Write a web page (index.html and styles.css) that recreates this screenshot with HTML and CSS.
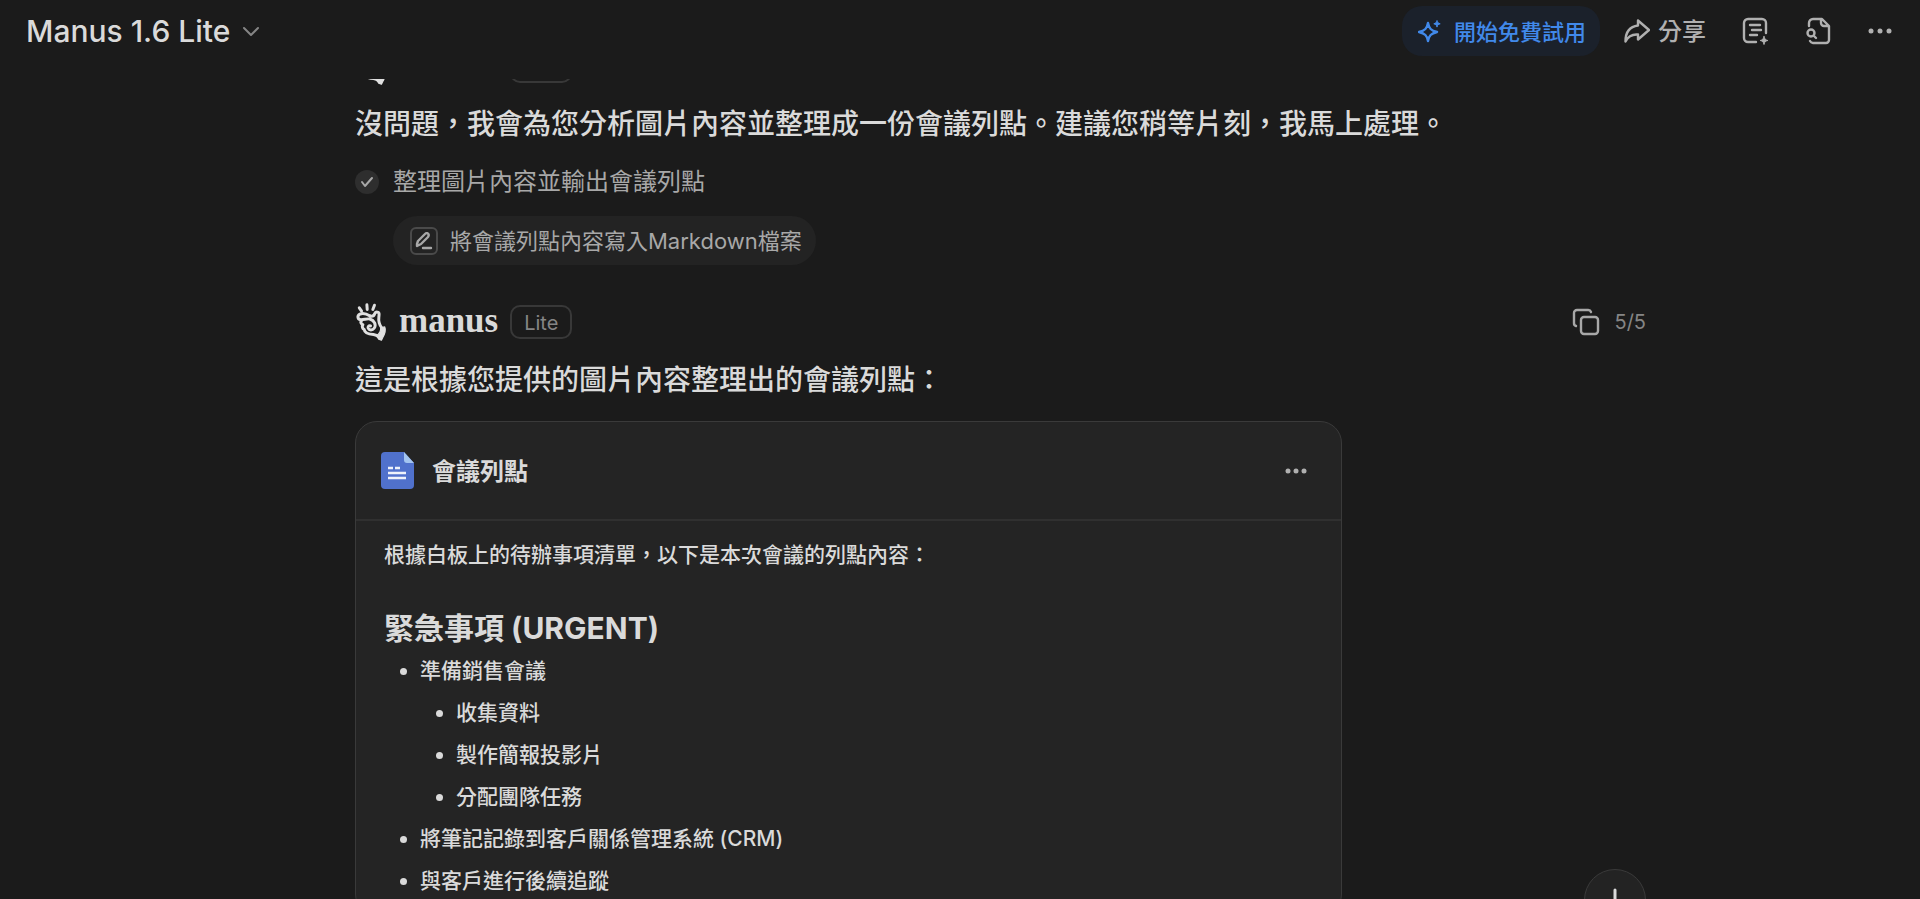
FILE: index.html
```html
<!DOCTYPE html>
<html lang="zh-Hant">

<head>

    <meta charset="UTF-8">
    <meta name="viewport" content="width=device-width, initial-scale=1.0">
    <title>Manus</title>

    <link rel="stylesheet" href="styles.css">

</head>

<body>

    <svg class="sprite" aria-hidden="true">
        <symbol id="hand" viewBox="0 0 100 120" fill="none" stroke="currentColor" stroke-width="9" stroke-linecap="round" stroke-linejoin="round">
            <path d="M13 17l7 10M36 8l1 14M59 9l-5 13" />
            <path d="M46 42c-8-5-21-11-31-6-10 6-7 17 4 17 9 0 19-4 26-2 14 4 20 18 13 28-5 7-15 7-18 0-2-5 2-9 7-7" />
            <path d="M46 42c8 2 12-2 14-8 3-6 13-5 13 2 0 10-3 17 0 25 2 6 3 11 7 15" />
            <path d="M20 55c-4 6-2 11 4 13-4 6-1 12 4 15 1 10 16 14 28 15 9 1 12 3 16 7" />
            <path d="M78 78l12-3c4 9 0 21-6 32l-4 8-8-3-6-10c8-7 13-14 12-24z" fill="currentColor" stroke-width="4" />
        </symbol>
    </svg>

    <header class="topbar">

        <button class="model-btn">
            Manus 1.6 Lite
            <svg width="18" height="18" viewBox="0 0 18 18" fill="none" stroke="#858585" stroke-width="2" stroke-linecap="round" stroke-linejoin="round"><path d="M2 6l7 7 7-7" /></svg>
        </button>

        <div class="actions">

            <button class="trial-btn">
                <svg width="24" height="24" viewBox="0 0 24 24" fill="none" stroke="currentColor" stroke-width="2.400" stroke-linejoin="round">
                    <path d="M10 4c1 5.500 3 7.500 9 9-6 1.500-8 3.500-9 9-1-5.500-3-7.500-9-9 6-1.500 8-3.500 9-9z" />
                    <path d="M19 1.500c.4 2 1.200 2.800 3.200 3.300-2 .5-2.800 1.300-3.200 3.300-.4-2-1.200-2.800-3.200-3.300 2-.5 2.800-1.300 3.200-3.300z" fill="currentColor" stroke-width="1" />
                </svg>
                <span>開始免費試用</span>
            </button>

            <button class="share-btn">
                <svg width="26" height="26" viewBox="0 0 26 26" fill="none" stroke="currentColor" stroke-width="2.400" stroke-linejoin="round"><path d="M14 2.500L25 12 14 21.500V16.500C8 16 4 18.500 1.500 23.500 1.500 14 6 8.500 14 7.500z" /></svg>
                <span>分享</span>
            </button>

            <button class="icon-btn" aria-label="筆記">
                <svg width="28" height="28" viewBox="0 0 28 28" fill="none" stroke="currentColor" stroke-width="2.400" stroke-linecap="round" stroke-linejoin="round">
                    <path d="M14 25H6a4 4 0 0 1-4-4V6a4 4 0 0 1 4-4h14a4 4 0 0 1 4 4v10M8 8h10M10 13h9M8 18h7" />
                    <path d="M22 19.500c.5 2.500 1.300 3.300 3.800 4-2.500.6-3.300 1.400-3.800 4-.5-2.600-1.300-3.400-3.800-4 2.500-.7 3.300-1.500 3.800-4z" fill="currentColor" stroke-width="1" />
                </svg>
            </button>

            <button class="icon-btn" aria-label="檔案">
                <svg width="26" height="28" viewBox="2 0 26 28" fill="none" stroke="currentColor" stroke-width="2.400" stroke-linecap="round" stroke-linejoin="round">
                    <path d="M5 9V6a4 4 0 0 1 4-4h9l7 7v14a3 3 0 0 1-3 3H9a4 4 0 0 1-3-2M17 2v4a3 3 0 0 0 3 3h4" />
                    <circle cx="7" cy="16" r="3.500" />
                    <path d="M10 19l2 2" />
                </svg>
            </button>

            <button class="icon-btn" aria-label="更多">
                <svg width="24" height="24" viewBox="0 0 24 24" fill="currentColor"><circle cx="3" cy="12" r="2.500" /><circle cx="12" cy="12" r="2.500" /><circle cx="21" cy="12" r="2.500" /></svg>
            </button>

        </div>

    </header>

    <main class="chat">

        <div class="messages">

            <section class="message">

                <div class="message-head">
                    <svg class="hand" width="33" height="40"><use href="#hand" /></svg>
                    <span class="brand">manus</span>
                    <span class="badge">Lite</span>
                </div>

                <p class="message-text">沒問題，我會為您分析圖片內容並整理成一份會議列點。建議您稍等片刻，我馬上處理。</p>

                <div class="task">
                    <span class="task-check">
                        <svg width="14" height="12" viewBox="0 0 14 12" fill="none" stroke="currentColor" stroke-width="2" stroke-linecap="round" stroke-linejoin="round"><path d="M2 6l3 4 7-8" /></svg>
                    </span>
                    整理圖片內容並輸出會議列點
                </div>

                <button class="step">
                    <span class="step-icon">
                        <svg width="18" height="18" viewBox="0 0 18 18" fill="none" stroke="currentColor" stroke-width="2.400" stroke-linecap="round" stroke-linejoin="round"><path d="M2 12l1-3 7-7c2-2 5 0 3 3l-7 7-4 2zM8 16h8" /></svg>
                    </span>
                    <span>將會議列點內容寫入Markdown檔案</span>
                </button>

            </section>

            <section class="message">

                <div class="message-head">
                    <svg class="hand" width="33" height="40"><use href="#hand" /></svg>
                    <span class="brand">manus</span>
                    <span class="badge">Lite</span>
                    <button class="copy-btn">
                        <svg width="28" height="28" viewBox="0 0 28 28" fill="none" stroke="#a8a8a8" stroke-width="2.400" stroke-linecap="round" stroke-linejoin="round"><rect x="9" y="9" width="17" height="17" rx="3" /><path d="M4 18a3 3 0 0 1-2-3V5a3 3 0 0 1 3-3h11a3 3 0 0 1 3 2" /></svg>
                        5/5
                    </button>
                </div>

                <p class="message-text">這是根據您提供的圖片內容整理出的會議列點：</p>

                <article class="card">

                    <div class="card-head">
                        <svg width="33" height="37" viewBox="0 0 33 37">
                            <path d="M4 0h19l10 11v22a4 4 0 0 1-4 4H4a4 4 0 0 1-4-4V4a4 4 0 0 1 4-4z" fill="#5071cc" />
                            <path d="M23 0l10 11h-7a3 3 0 0 1-3-3z" fill="#a4c5f0" />
                            <path d="M7 16h5M14 16h5M7 21h18M7 26h18" stroke="#eef2fb" stroke-width="2.400" />
                        </svg>
                        <h2>會議列點</h2>
                        <button class="card-more" aria-label="更多">
                            <svg width="22" height="22" viewBox="0 0 22 22" fill="currentColor"><circle cx="3" cy="11" r="2.500" /><circle cx="11" cy="11" r="2.500" /><circle cx="19" cy="11" r="2.500" /></svg>
                        </button>
                    </div>

                    <div class="card-body">

                        <p>根據白板上的待辦事項清單，以下是本次會議的列點內容：</p>

                        <h3>緊急事項 (URGENT)</h3>

                        <ul>
                            <li>準備銷售會議
                                <ul>
                                    <li>收集資料</li>
                                    <li>製作簡報投影片</li>
                                    <li>分配團隊任務</li>
                                </ul>
                            </li>
                            <li>將筆記記錄到客戶關係管理系統 (CRM)</li>
                            <li>與客戶進行後續追蹤</li>
                        </ul>

                    </div>

                </article>

            </section>

        </div>

        <button class="scroll-btn" aria-label="捲動到底部">
            <svg width="24" height="24" viewBox="0 0 24 24" fill="none" stroke="currentColor" stroke-width="3" stroke-linecap="round" stroke-linejoin="round"><path d="M12 2v20M3 13l9 9 9-9" /></svg>
        </button>

    </main>

</body>

</html>
```

FILE: styles.css
```css
* {
    box-sizing: border-box;
}

body {
    margin: 0;
    height: 100vh;
    display: flex;
    flex-direction: column;
    overflow: hidden;
    background-color: #1b1b1b;
    color: #dadada;
    font-family: Inter, "Noto Sans CJK TC", sans-serif;
}

h2, h3, p, ul {
    margin: 0;
}

button {
    display: flex;
    align-items: center;
    padding: 0;
    border: none;
    background: none;
    color: inherit;
    font: inherit;
    cursor: pointer;
}

svg {
    flex-shrink: 0;
}

.sprite {
    position: absolute;
    width: 0;
    height: 0;
}

.topbar {
    display: flex;
    justify-content: space-between;
    align-items: flex-start;
    flex-shrink: 0;
    height: 79px;
    padding: 6px 28px 0 26px;
}

.model-btn {
    height: 50px;
    gap: 12px;
    font-size: 30px;
    font-weight: 500;
}

.actions {
    display: flex;
    align-items: center;
    height: 50px;
    color: #b0b0b0;
}

.trial-btn {
    height: 50px;
    gap: 12px;
    padding: 0 14px 0 16px;
    margin-right: 24px;
    border-radius: 20px;
    background-color: #1b212b;
    color: #4189ea;
    font-size: 22px;
    font-weight: 500;
}

.share-btn {
    gap: 8px;
    font-size: 24px;
    font-weight: 500;
}

.trial-btn span,
.share-btn span,
.step > span:last-child,
.card-head h2 {
    padding-bottom: 3px;
}

.icon-btn {
    margin-left: 36px;
}

.chat {
    position: relative;
    flex: 1;
    min-height: 0;
    overflow: hidden;
    padding: 0 274px 0 355px;
}

/* scrolled a little past the first message header */
.messages {
    margin-top: -35px;
}

.message + .message {
    margin-top: 35px;
}

.message-head {
    display: flex;
    align-items: center;
    height: 44px;
}

.hand {
    color: #e0e0e0;
}

.brand {
    margin: 0 12px 0 11px;
    padding-bottom: 3px;
    font-family: "Liberation Serif", serif;
    font-size: 35px;
    font-weight: bold;
    line-height: 41px;
}

.badge {
    height: 34px;
    padding: 0 12px;
    border: 2px solid #383838;
    border-radius: 10px;
    color: #858585;
    font-size: 20px;
    line-height: 32px;
}

.copy-btn {
    gap: 14px;
    margin-left: auto;
    color: #858585;
    font-size: 20px;
}

.message-text {
    margin-top: 15px;
    font-size: 28px;
    font-weight: 500;
    line-height: 42px;
}

.task {
    display: flex;
    align-items: center;
    gap: 14px;
    margin-top: 22px;
    color: #a8a8a8;
    font-size: 24px;
    line-height: 30px;
}

.task-check {
    display: flex;
    justify-content: center;
    align-items: center;
    width: 24px;
    height: 24px;
    border-radius: 50%;
    background-color: #2e2e2e;
}

.step {
    height: 49px;
    gap: 12px;
    margin: 19px 0 0 38px;
    padding: 0 14px 0 17px;
    border-radius: 25px;
    background-color: #232323;
    color: #a8a8a8;
    font-size: 22px;
}

.step-icon {
    display: flex;
    justify-content: center;
    align-items: center;
    width: 28px;
    height: 28px;
    border: 2px solid #4a4a4a;
    border-radius: 6px;
}

.card {
    max-width: 987px;
    margin-top: 20px;
    border: 1px solid #3a3a3a;
    border-radius: 22px;
    background-color: #242424;
}

.card-head {
    display: flex;
    align-items: center;
    gap: 18px;
    height: 99px;
    padding: 0 34px 0 25px;
    border-bottom: 2px solid #303030;
}

.card-head h2 {
    font-size: 24px;
    font-weight: 600;
}

.card-more {
    margin-left: auto;
    color: #b0b0b0;
}

.card-body {
    padding: 13px 28px;
    font-size: 21px;
    font-weight: 500;
    line-height: 42px;
}

.card-body h3 {
    margin: 31px 0 1px;
    font-size: 30px;
    font-weight: 700;
}

.card-body ul {
    padding-left: 36px;
    list-style: disc;
}

.scroll-btn {
    position: absolute;
    right: 274px;
    bottom: -32px;
    justify-content: center;
    width: 62px;
    height: 62px;
    border: 1px solid #3a3a3a;
    border-radius: 50%;
    background-color: #232323;
}
```
